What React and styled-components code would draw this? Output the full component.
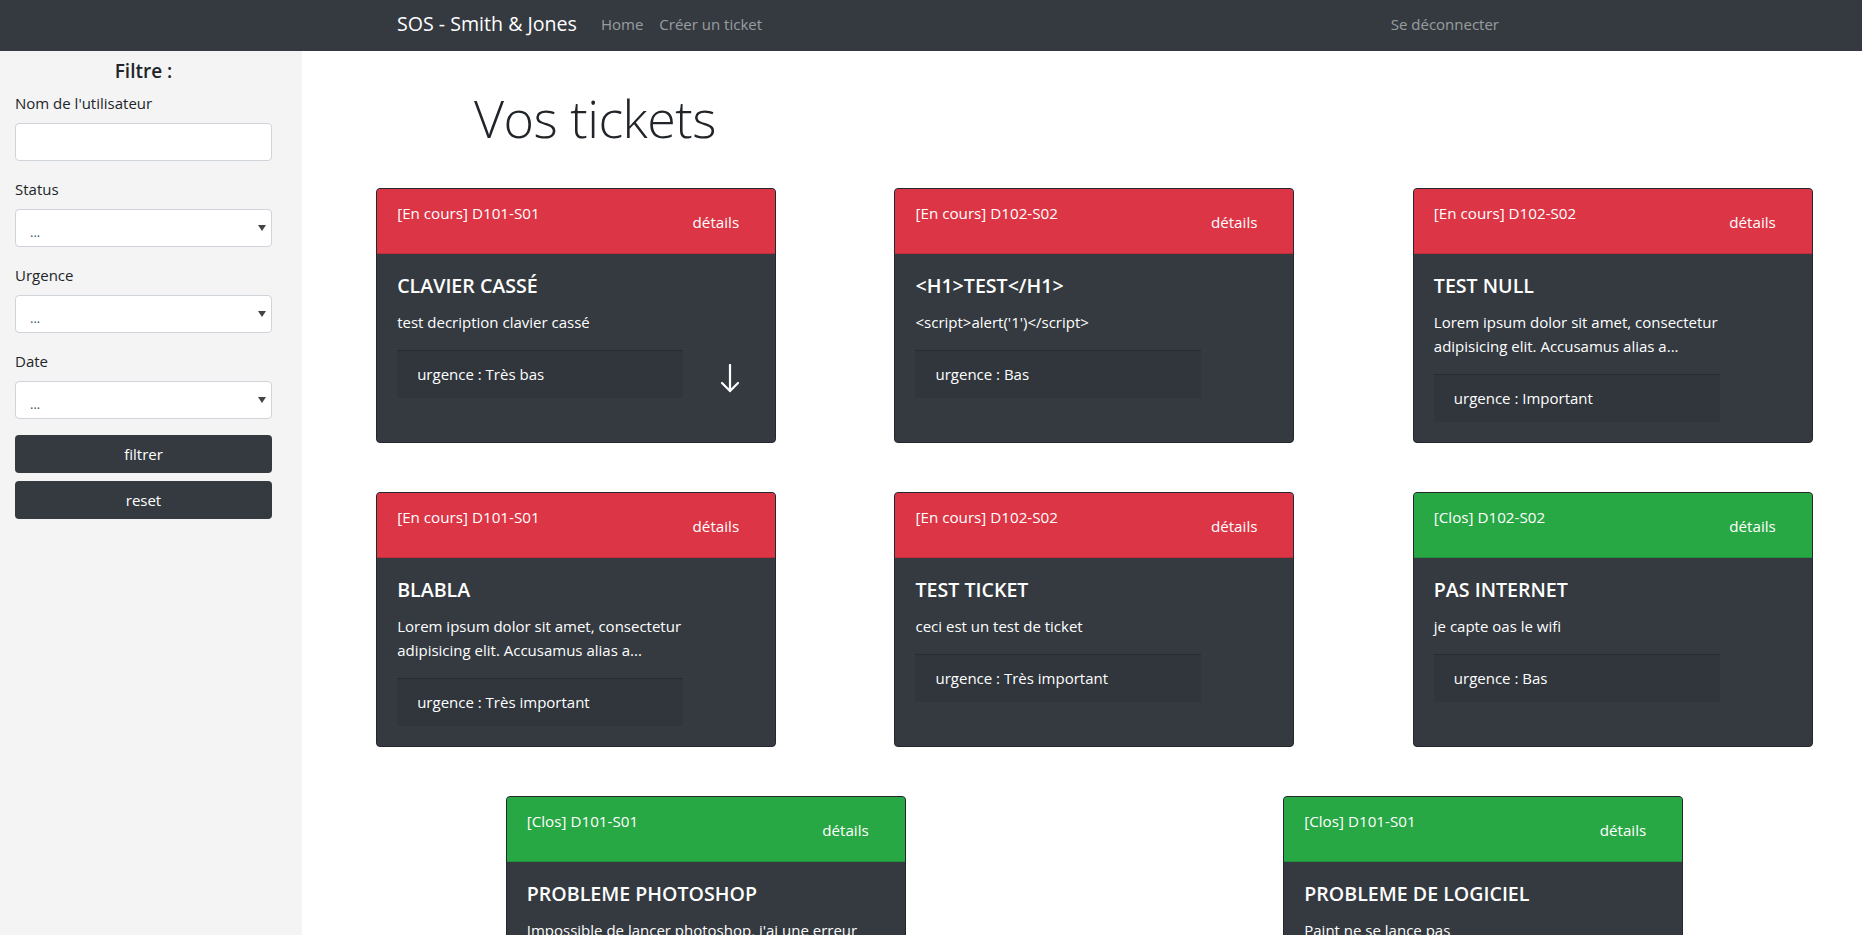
import React from "react";
import styled, { createGlobalStyle } from "styled-components";

const GlobalStyle = createGlobalStyle`
  html, body {
    margin: 0;
    padding: 0;
  }
  body {
    font-family: "Segoe UI", "Open Sans", "Noto Sans", sans-serif;
    font-size: 15px;
    line-height: 1.5;
    color: #212529;
    background: #fff;
    overflow-x: hidden;
  }
  * {
    box-sizing: border-box;
  }
`;

const Navbar = styled.nav`
  height: 51px;
  background: #343a40;
  display: flex;
  align-items: center;
  padding: 0 355px 3px 397px;
`;

const Brand = styled.a`
  color: #fff;
  font-size: 19.6px;
  line-height: 30px;
  margin-right: 16px;
  text-decoration: none;
`;

const NavLink = styled.a`
  color: rgba(255, 255, 255, 0.5);
  font-size: 15px;
  padding: 8px;
  text-decoration: none;
  margin-left: ${(p) => (p.$push ? "auto" : "0")};
`;

const Layout = styled.div`
  display: flex;
  min-height: calc(100vh - 51px);
`;

const Sidebar = styled.aside`
  width: 302px;
  flex-shrink: 0;
  background: #f4f4f4;
  padding: 8px 30px 0 15px;
`;

const FilterTitle = styled.h5`
  margin: 0 0 8px;
  font-size: 19px;
  line-height: 24px;
  font-weight: 600;
  text-align: center;
`;

const FormGroup = styled.div`
  margin-bottom: 16px;
`;

const Label = styled.label`
  display: block;
  margin-bottom: 8px;
  font-size: 15px;
  line-height: 24px;
`;

const TextInput = styled.input`
  display: block;
  width: 100%;
  height: 38px;
  border: 1px solid #ced4da;
  border-radius: 4px;
  background: #fff;
  padding: 6px 12px;
  font: inherit;
`;

const SelectWrap = styled.div`
  position: relative;

  &::after {
    content: "";
    position: absolute;
    right: 6px;
    top: 16px;
    border-left: 4px solid transparent;
    border-right: 4px solid transparent;
    border-top: 6px solid #444;
    pointer-events: none;
  }
`;

const Select = styled.select`
  display: block;
  width: 100%;
  height: 38px;
  border: 1px solid #ced4da;
  border-radius: 4px;
  background: #fff;
  padding: 8px 24px 0 14px;
  font-family: inherit;
  font-size: 13px;
  color: #495057;
  appearance: none;
`;

const DarkButton = styled.button`
  display: block;
  width: 100%;
  height: 38px;
  margin-bottom: 8px;
  border: none;
  border-radius: 4px;
  background: #343a40;
  color: #fff;
  font-family: inherit;
  font-size: 15px;
`;

const Main = styled.main`
  flex: 1;
  min-width: 0;
  padding-left: 15px;
  overflow: hidden;
`;

const PageTitle = styled.h1`
  margin: 33px 0 37px;
  padding-left: 157px;
  font-size: 52px;
  line-height: 67px;
  font-weight: 300;
  letter-spacing: -0.5px;
  color: #212529;
`;

const CardList = styled.div`
  width: 1555px;
  display: flex;
  flex-wrap: wrap;
  justify-content: space-around;
  row-gap: 49px;
  padding-bottom: 40px;
`;

const Card = styled.div`
  width: 400px;
  display: flex;
  flex-direction: column;
  border: 1px solid #24282c;
  border-radius: 4px;
  background: #343a40;
  color: #fff;
  overflow: hidden;
`;

const CardHeader = styled.div`
  display: flex;
  justify-content: space-between;
  align-items: flex-start;
  padding: 12px 20px;
  background: ${(p) => (p.$closed ? "#28a745" : "#dc3545")};
  border-bottom: 1px solid rgba(0, 0, 0, 0.125);
`;

const HeaderTitle = styled.span`
  font-size: 15.2px;
  line-height: 24px;
`;

const DetailsLink = styled.a`
  padding: 9px 16px 7px;
  font-size: 15.2px;
  line-height: 24px;
  color: #fff;
  text-decoration: none;
`;

const CardBody = styled.div`
  flex: 1;
  padding: 20px;
`;

const CardTitle = styled.h5`
  margin: 0 0 12px;
  font-size: 19.6px;
  line-height: 24px;
  font-weight: 600;
  text-transform: uppercase;
`;

const CardText = styled.p`
  margin: 0 0 16px;
  font-size: 15px;
  line-height: 24px;
`;

const UrgenceRow = styled.div`
  display: flex;
`;

const UrgenceBox = styled.div`
  width: 286px;
  padding: 11px 20px 12px;
  border-top: 1px solid rgba(0, 0, 0, 0.18);
  background: rgba(0, 0, 0, 0.06);
  font-size: 15px;
  line-height: 24px;
`;

const ArrowCell = styled.div`
  flex: 1;
  display: flex;
  justify-content: center;
  padding: 14px 0 0 22px;
`;

const tickets = [
  { status: "En cours", room: "D101-S01", title: "Clavier cassé", text: "test decription clavier cassé", urgence: "Très bas", arrow: true },
  { status: "En cours", room: "D102-S02", title: "<h1>test</h1>", text: "<script>alert('1')</script>", urgence: "Bas" },
  { status: "En cours", room: "D102-S02", title: "test null", text: "Lorem ipsum dolor sit amet, consectetur adipisicing elit. Accusamus alias a...", urgence: "Important" },
  { status: "En cours", room: "D101-S01", title: "blabla", text: "Lorem ipsum dolor sit amet, consectetur adipisicing elit. Accusamus alias a...", urgence: "Très important" },
  { status: "En cours", room: "D102-S02", title: "test ticket", text: "ceci est un test de ticket", urgence: "Très important" },
  { status: "Clos", room: "D102-S02", title: "pas internet", text: "je capte oas le wifi", urgence: "Bas" },
  { status: "Clos", room: "D101-S01", title: "probleme photoshop", text: "Impossible de lancer photoshop, j'ai une erreur inconnue au démarr...", urgence: "Moyen" },
  { status: "Clos", room: "D101-S01", title: "probleme de logiciel", text: "Paint ne se lance pas", urgence: "Bas" },
];

const ArrowDown = () => (
  <svg width="20" height="29" viewBox="0 0 20 29" fill="none" stroke="#fff" strokeWidth="2.2" strokeLinecap="round">
    <line x1="10" y1="1" x2="10" y2="27" />
    <polyline points="2,19 10,27 18,19" />
  </svg>
);

const TicketCard = ({ ticket }) => (
  <Card>
    <CardHeader $closed={ticket.status === "Clos"}>
      <HeaderTitle>
        [{ticket.status}] {ticket.room}
      </HeaderTitle>
      <DetailsLink href="#">détails</DetailsLink>
    </CardHeader>
    <CardBody>
      <CardTitle>{ticket.title}</CardTitle>
      <CardText>{ticket.text}</CardText>
      <UrgenceRow>
        <UrgenceBox>urgence : {ticket.urgence}</UrgenceBox>
        {ticket.arrow && (
          <ArrowCell>
            <ArrowDown />
          </ArrowCell>
        )}
      </UrgenceRow>
    </CardBody>
  </Card>
);

const App = () => {
  return (
    <>
      <GlobalStyle />
      <Navbar>
        <Brand href="#">SOS - Smith &amp; Jones</Brand>
        <NavLink href="#">Home</NavLink>
        <NavLink href="#">Créer un ticket</NavLink>
        <NavLink href="#" $push>
          Se déconnecter
        </NavLink>
      </Navbar>
      <Layout>
        <Sidebar>
          <FilterTitle>Filtre :</FilterTitle>
          <FormGroup>
            <Label>Nom de l'utilisateur</Label>
            <TextInput type="text" />
          </FormGroup>
          <FormGroup>
            <Label>Status</Label>
            <SelectWrap>
              <Select defaultValue="">
                <option value="">...</option>
              </Select>
            </SelectWrap>
          </FormGroup>
          <FormGroup>
            <Label>Urgence</Label>
            <SelectWrap>
              <Select defaultValue="">
                <option value="">...</option>
              </Select>
            </SelectWrap>
          </FormGroup>
          <FormGroup>
            <Label>Date</Label>
            <SelectWrap>
              <Select defaultValue="">
                <option value="">...</option>
              </Select>
            </SelectWrap>
          </FormGroup>
          <DarkButton>filtrer</DarkButton>
          <DarkButton>reset</DarkButton>
        </Sidebar>
        <Main>
          <PageTitle>Vos tickets</PageTitle>
          <CardList>
            {tickets.map((t, i) => (
              <TicketCard key={i} ticket={t} />
            ))}
          </CardList>
        </Main>
      </Layout>
    </>
  );
};

export default App;
